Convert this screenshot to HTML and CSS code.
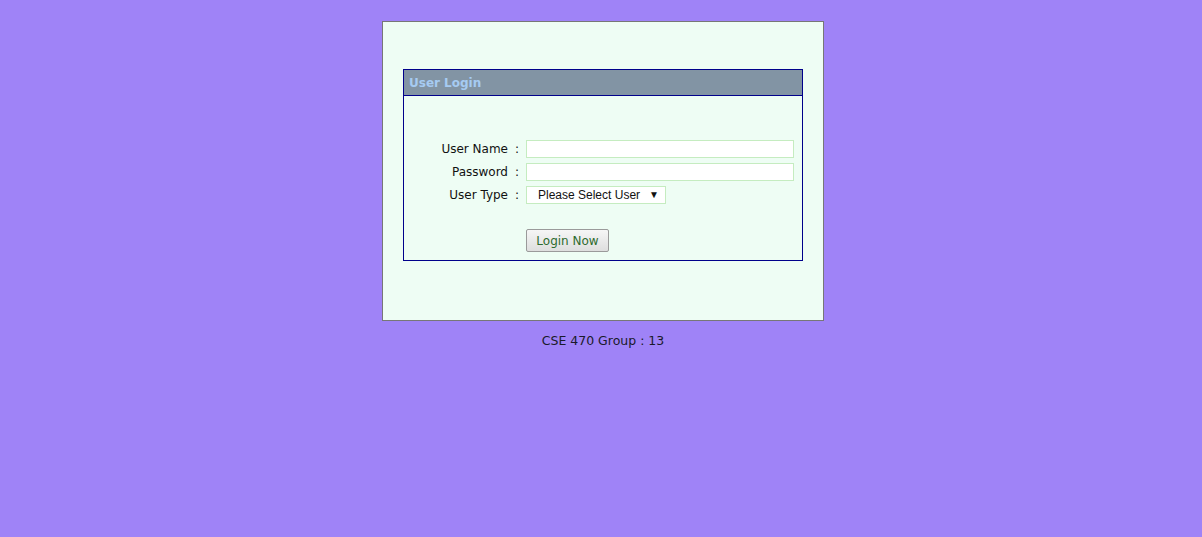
FILE: index.html
```html
<!DOCTYPE html>
<html>
<head>
<meta charset="utf-8">
<link rel="stylesheet" href="styles.css">
</head>
<body>
<div class="page">
  <div class="box">
    <div class="panel">
      <div class="panel-head">User Login</div>
      <div class="panel-body">
        <div class="form">
          <div class="lbl">User Name</div><div class="colon">:</div><div class="field"><input class="txt" type="text"></div>
          <div class="lbl">Password</div><div class="colon">:</div><div class="field"><input class="txt" type="password"></div>
          <div class="lbl">User Type</div><div class="colon">:</div><div class="field"><div class="select"><span>Please Select User</span><span class="arrow">&#9660;</span></div></div>
          <div class="lbl"></div><div class="colon"></div><div class="field btn-row"><button class="btn">Login Now</button></div>
        </div>
      </div>
    </div>
  </div>
  <div class="footer">CSE 470 Group : 13</div>
</div>
</body>
</html>
```
FILE: styles.css
```css
html, body {
  margin: 0;
  padding: 0;
  background: #9f83f7;
  font-family: "DejaVu Sans", Verdana, sans-serif;
  font-size: 12px;
  color: #111;
}
.page {
  padding-top: 21px;
}
.box {
  width: 400px;
  margin-left: calc(50% - 219px);
  border: 1px solid #777;
  background: #eefdf4;
  padding: 47px 20px 59px 20px;
}
.panel {
  border: 1px solid #00008b;
}
.panel-head {
  height: 24px;
  padding-top: 1px;
  background: #8294a4;
  border-bottom: 1px solid #00008b;
  color: #a6cbf2;
  font-weight: bold;
  font-size: 12px;
  line-height: 25px;
  padding-left: 5px;
}
.panel-body {
  padding: 44px 8px 8px 0;
}
.form {
  display: grid;
  grid-template-columns: 1fr 18px 268px;
  row-gap: 5px;
  align-items: center;
}
.lbl {
  text-align: right;
  font-size: 12px;
  color: #111;
  height: 18px;
  line-height: 18px;
  padding-right: 0;
}
.colon {
  text-align: center;
  height: 18px;
  line-height: 18px;
}
.field {
  height: 18px;
  display: flex;
}
.txt {
  box-sizing: border-box;
  width: 268px;
  height: 18px;
  margin: 0;
  padding: 0 2px;
  border: 1px solid #c5ecc0;
  background: #fff;
  outline: none;
}
.select {
  box-sizing: border-box;
  width: 140px;
  height: 18px;
  border: 1px solid #c5ecc0;
  background: #fff;
  font-family: "Liberation Sans", Arial, sans-serif;
  font-size: 12px;
  line-height: 16px;
  padding-left: 11px;
  display: flex;
  gap: 9px;
  color: #111;
}
.arrow {
  font-size: 10px;
  line-height: 16px;
}
.btn-row {
  height: 23px;
  margin-top: 20px;
}
.btn {
  box-sizing: border-box;
  width: 83px;
  height: 23px;
  margin: 0;
  padding: 0;
  border: 1px solid #9a9a9a;
  border-radius: 2px;
  background: linear-gradient(#f6f6f6, #dedede);
  color: #2e6b2e;
  font-family: "DejaVu Sans", Verdana, sans-serif;
  font-size: 12px;
}
.footer {
  text-align: center;
  margin-top: 12px;
  margin-left: 4px;
  font-size: 12.5px;
  color: #1a1a2a;
  line-height: 15px;
}
```
